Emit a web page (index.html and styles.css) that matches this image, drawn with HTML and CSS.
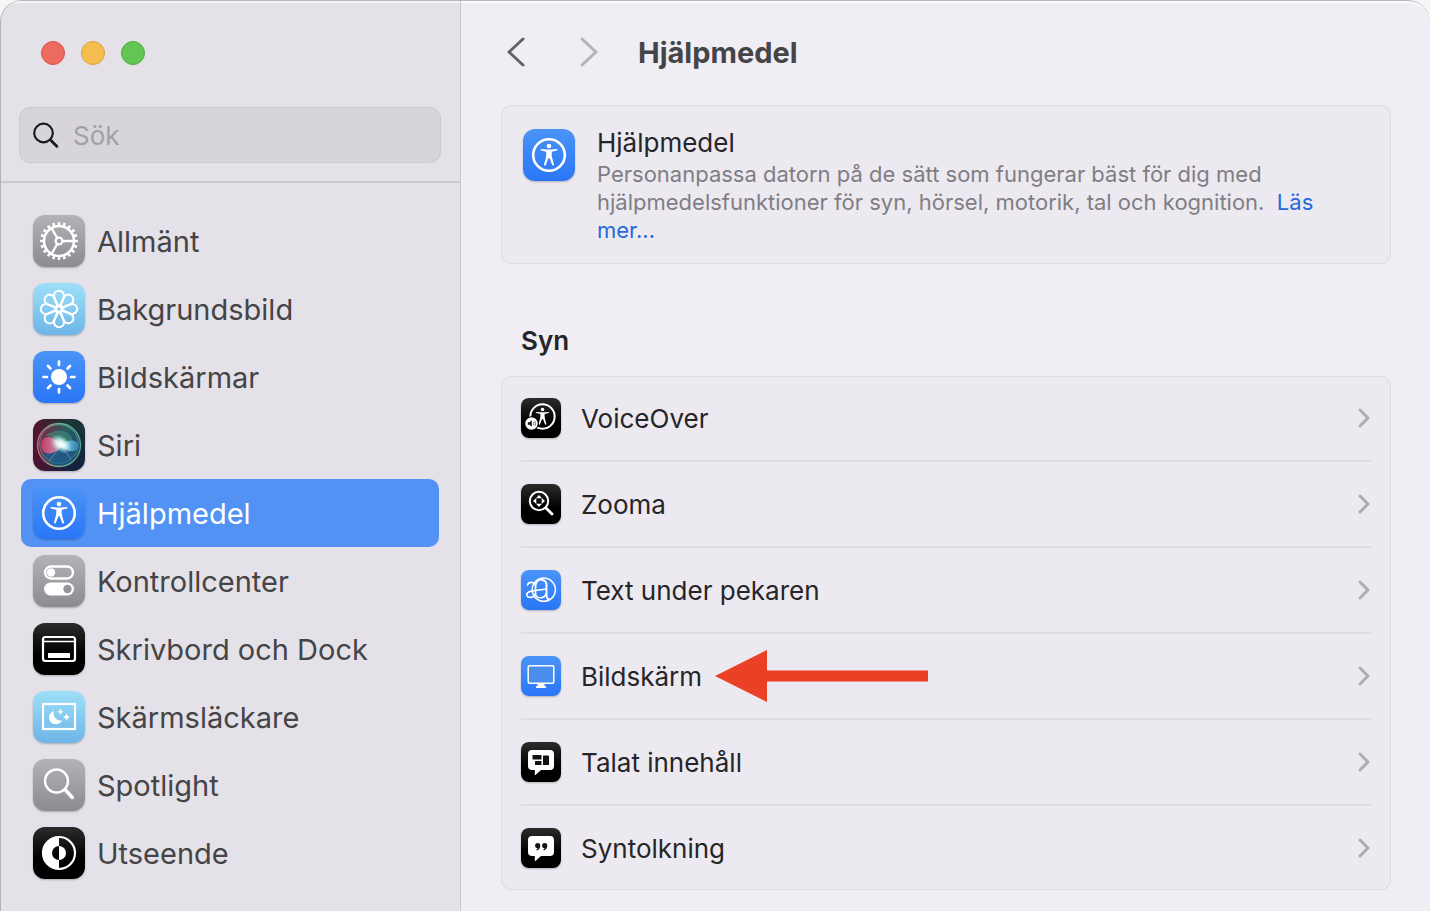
FILE: index.html
```
<!DOCTYPE html>
<html lang="sv">
<head>
<meta charset="utf-8">
<title>Hjälpmedel</title>
<meta name="viewport" content="width=device-width, initial-scale=1">
<link rel="stylesheet" href="styles.css">
</head>

<body>
<!-- shared symbols -->
<svg class="defs" width="0" height="0" aria-hidden="true">
	<symbol id="person" viewBox="0 0 52 52">
		<circle cx="26" cy="26" r="15.800" fill="none" stroke="#fff" stroke-width="2.600"/>
		<circle cx="26" cy="17" r="2.300" fill="#fff"/>
		<path d="M17.800 20q-.7 1.100.4 1.600l5 1.200q.4 3.200-.4 6.200l-1.800 6.400q0 1.600 1.600 1l2.800-7.200h1.200l2.800 7.200q1.600.6 1.600-1L29.200 29q-.8-3-.4-6.200l5-1.200q1.100-.5.4-1.600l-5.700.6h-5z" fill="#fff"/>
	</symbol>
	<symbol id="chev" viewBox="0 0 12 20">
		<path d="M2 2l8 8-8 8" fill="none" stroke="currentColor" stroke-width="2.900" stroke-linecap="round" stroke-linejoin="round"/>
	</symbol>
</svg>

<div class="window">
	<aside class="side">
		<div class="lights">
			<button class="red" type="button" aria-label="Stäng"></button>
			<button class="yellow" type="button" aria-label="Minimera"></button>
			<button class="green" type="button" aria-label="Zooma fönstret"></button>
		</div>
		<label class="search">
			<svg width="26" height="26" viewBox="0 0 26 26" aria-hidden="true"><g fill="none" stroke="#1c1c1e" stroke-linecap="round"><circle cx="10.500" cy="11" r="9.300" stroke-width="2.200"/><path d="M17.500 18l6.300 6.300" stroke-width="2.900"/></g></svg>
			<input type="text" placeholder="Sök" aria-label="Sök">
		</label>
		<nav class="menu">
			<a href="#allmant">
				<svg class="ico gray" viewBox="0 0 52 52" aria-hidden="true"><g fill="none" stroke="#fff">
					<circle cx="26" cy="26" r="15" stroke-width="2.600"/>
					<circle cx="26" cy="26" r="17.400" stroke-width="3" pathLength="120" stroke-dasharray="2.800 3.200" stroke-dashoffset="1.400"/>
					<circle cx="26" cy="26" r="3.400" stroke-width="2.200"/>
					<path d="M29.500 26H41M24.200 23L18.500 13M24.200 29L18.500 39" stroke-width="2.400"/>
				</g></svg>
				<span>Allmänt</span>
			</a>
			<a href="#bakgrundsbild">
				<svg class="ico sky" viewBox="0 0 52 52" aria-hidden="true"><defs><path id="petal" d="M26 25.500C25 20 21 16.800 21 12.800A5 5 0 0 1 31 12.800C31 16.800 27 20 26 25.500z"/></defs><g fill="none" stroke="#fff" stroke-width="2.100">
					<use href="#petal"/><use href="#petal" transform="rotate(45 26 26)"/><use href="#petal" transform="rotate(90 26 26)"/><use href="#petal" transform="rotate(135 26 26)"/>
					<use href="#petal" transform="rotate(180 26 26)"/><use href="#petal" transform="rotate(225 26 26)"/><use href="#petal" transform="rotate(270 26 26)"/><use href="#petal" transform="rotate(315 26 26)"/>
					<circle cx="26" cy="26" r="2.800" fill="#87c6ec"/>
				</g></svg>
				<span>Bakgrundsbild</span>
			</a>
			<a href="#bildskarmar">
				<svg class="ico blue" viewBox="0 0 52 52" aria-hidden="true"><circle cx="26" cy="26" r="8" fill="#fff"/><path d="M26 10.500v3.500M26 38v3.500M10.500 26H14M38 26h3.500M15 15l2.500 2.500M34.500 34.500L37 37M15 37l2.500-2.500M34.500 17.500L37 15" stroke="#fff" stroke-width="2.700" stroke-linecap="round"/></svg>
				<span>Bildskärmar</span>
			</a>
			<a href="#siri">
				<svg class="ico siri" viewBox="0 0 52 52" aria-hidden="true">
					<defs>
						<radialGradient id="glow"><stop offset="0" stop-color="#fff"/><stop offset=".4" stop-color="#f0fffd" stop-opacity=".85"/><stop offset="1" stop-color="#9ff" stop-opacity="0"/></radialGradient>
						<linearGradient id="orb" x1="0" x2="1" y1=".3" y2=".7"><stop offset="0" stop-color="#7d2344"/><stop offset=".5" stop-color="#2c5a60"/><stop offset="1" stop-color="#1b4a6b"/></linearGradient>
						<linearGradient id="rim" x1="0" x2="1"><stop offset="0" stop-color="#d2677f"/><stop offset=".5" stop-color="#6fae98"/><stop offset="1" stop-color="#4fa69b"/></linearGradient>
						<linearGradient id="pink" x1="0" x2="1"><stop offset="0" stop-color="#d93a6c"/><stop offset="1" stop-color="#f5b3c8"/></linearGradient>
						<linearGradient id="cyan" x1="0" x2="1"><stop offset="0" stop-color="#c2eef8"/><stop offset="1" stop-color="#2a92cf"/></linearGradient>
					</defs>
					<circle cx="26" cy="26" r="21.500" fill="url(#orb)" stroke="url(#rim)" stroke-width="1.300"/>
					<circle cx="26" cy="25" r="19.300" fill="none" stroke="#6bb69b" stroke-opacity=".6"/>
					<path d="M11 36Q26 25 42 35Q37 45 26 46Q16 45 11 36z" fill="#1e5a96" opacity=".65"/>
					<path d="M12 16Q30 6 39 18Q42 25 27 26Q23 18 12 16z" fill="#3f9b7c" opacity=".5"/>
					<path d="M27 25C18 14 8 17 8 26S18 39 29 27z" fill="url(#pink)" opacity=".8"/>
					<path d="M28 26C35 20 45 20 45 27S35 34 28 27z" fill="url(#cyan)" opacity=".8"/>
					<path d="M28 27L16 42M28 27L38 40" stroke="#b6b4d6" stroke-opacity=".5"/>
					<ellipse cx="28" cy="25" rx="12" ry="8" fill="url(#glow)" transform="rotate(35 28 25)"/>
				</svg>
				<span>Siri</span>
			</a>
			<a class="active" href="#hjalpmedel" aria-current="page">
				<svg class="ico blue" viewBox="0 0 52 52" aria-hidden="true"><use href="#person"/></svg>
				<span>Hjälpmedel</span>
			</a>
			<a href="#kontrollcenter">
				<svg class="ico gray" viewBox="0 0 52 52" aria-hidden="true"><rect x="12" y="11.500" width="28" height="12" rx="6" fill="none" stroke="#fff" stroke-width="2.400"/><circle cx="18" cy="17.500" r="4.200" fill="#fff"/><rect x="11" y="27.500" width="30" height="13" rx="6.500" fill="#fff"/><circle cx="34.500" cy="34" r="4.200" fill="#949398"/></svg>
				<span>Kontrollcenter</span>
			</a>
			<a href="#dock">
				<svg class="ico black" viewBox="0 0 52 52" aria-hidden="true"><rect x="10" y="14" width="32" height="24" rx="2.500" fill="none" stroke="#fff" stroke-width="2.200"/><path d="M10 18.500h32" stroke="#fff" stroke-width="1.500"/><rect x="15" y="30" width="22" height="5" rx=".5" fill="#fff"/></svg>
				<span>Skrivbord och Dock</span>
			</a>
			<a href="#skarmslackare">
				<svg class="ico sky" viewBox="0 0 52 52" aria-hidden="true"><rect x="10" y="13" width="32" height="25" fill="none" stroke="#fff" stroke-width="2.200"/><path d="M21 20A6.800 6.800 0 1 0 29 29.500A7.200 7.200 0 0 1 21 20zM27.500 17.500q.5 2.700 3 3.200-2.500.5-3 3.200-.5-2.700-3-3.200 2.500-.5 3-3.200zM33.500 22.500q.6 3 3.500 3.500-2.900.5-3.500 3.500-.6-3-3.500-3.500 2.900-.5 3.500-3.500z" fill="#fff"/></svg>
				<span>Skärmsläckare</span>
			</a>
			<a href="#spotlight">
				<svg class="ico gray" viewBox="0 0 52 52" aria-hidden="true"><g fill="none" stroke="#fff" stroke-linecap="round"><circle cx="23.500" cy="22" r="11.500" stroke-width="2.400"/><path d="M32.500 31l6.800 7.500" stroke-width="3.400"/></g></svg>
				<span>Spotlight</span>
			</a>
			<a href="#utseende">
				<svg class="ico black" viewBox="0 0 52 52" aria-hidden="true"><circle cx="26" cy="26" r="16" fill="none" stroke="#fff" stroke-width="2.200"/><path d="M26 10a16 16 0 0 0 0 32v-9a7 7 0 0 1 0-14z" fill="#fff"/><path d="M26 19a7 7 0 0 1 0 14z" fill="#fff"/></svg>
				<span>Utseende</span>
			</a>
		</nav>
	</aside>

	<main class="main">
		<header class="bar">
			<button class="back" type="button" aria-label="Bakåt"><svg width="20" height="32" viewBox="0 0 20 32" aria-hidden="true"><path d="M17 3L3 16l14 13" fill="none" stroke="currentColor" stroke-width="3" stroke-linecap="round" stroke-linejoin="round"/></svg></button>
			<button class="fwd" type="button" aria-label="Framåt"><svg width="20" height="32" viewBox="0 0 20 32" aria-hidden="true"><path d="M3 3l14 13L3 29" fill="none" stroke="currentColor" stroke-width="3" stroke-linecap="round" stroke-linejoin="round"/></svg></button>
			<h1>Hjälpmedel</h1>
		</header>

		<section class="card intro">
			<svg class="ico blue" viewBox="0 0 52 52" aria-hidden="true"><use href="#person"/></svg>
			<div>
				<h2>Hjälpmedel</h2>
				<p>Personanpassa datorn på de sätt som fungerar bäst för dig med hjälpmedelsfunktioner för syn, hörsel, motorik, tal och kognition.&nbsp; <a href="#las-mer">Läs mer...</a></p>
			</div>
		</section>

		<h3>Syn</h3>
		<div class="card list">
			<a href="#voiceover">
				<svg class="ico black" viewBox="0 0 40 40" aria-hidden="true"><svg x="1.500" y="-1.500" width="40" height="40" viewBox="0 0 52 52"><use href="#person"/></svg><circle cx="10.500" cy="25.500" r="7.200" fill="#000"/><circle cx="10.500" cy="25.500" r="6.200" fill="#fff"/><path d="M6.800 24.300h1.700l2.300-2v6.400l-2.300-2H6.800z" fill="#111"/><path d="M12.300 24q1 1.500 0 3M13.800 23q1.700 2.500 0 5" fill="none" stroke="#555" stroke-width=".8"/></svg>
				<span>VoiceOver</span>
				<svg class="chev" aria-hidden="true"><use href="#chev"/></svg>
			</a>
			<a href="#zooma">
				<svg class="ico black" viewBox="0 0 40 40" aria-hidden="true"><g fill="none" stroke="#fff" stroke-linecap="round"><circle cx="18" cy="17" r="9.200" stroke-width="2"/><path d="M25 24l6 6" stroke-width="2.800"/></g><path d="M18 11l3 3.300h-6zM18 23l3-3.300h-6zM12 17l3.300-3v6zM24 17l-3.300-3v6z" fill="#fff"/></svg>
				<span>Zooma</span>
				<svg class="chev" aria-hidden="true"><use href="#chev"/></svg>
			</a>
			<a href="#pekaren">
				<svg class="ico blue" viewBox="0 0 40 40" aria-hidden="true"><g fill="none" stroke="#fff" stroke-linecap="round"><circle cx="22.800" cy="19.700" r="11.600" stroke-width="1.500"/><path d="M6.500 15C7.500 11.500 14.500 11 14.800 16.500" stroke-width="1.600"/><path d="M25 19C17 20.500 5.800 20 5.800 24.500C5.800 29 13.500 28 14.500 23.500" stroke-width="1.600"/><path d="M14.800 14C17 7.500 25.500 8.500 25.500 15.500V24c0 3.500 1 5.500 3 5.500" stroke-width="1.900"/><path d="M14.500 15v8.500c0 6 9.500 5.500 11-.5" stroke-width="1.600"/></g></svg>
				<span>Text under pekaren</span>
				<svg class="chev" aria-hidden="true"><use href="#chev"/></svg>
			</a>
			<a href="#bildskarm">
				<svg class="ico blue" viewBox="0 0 40 40" aria-hidden="true"><rect x="7.200" y="9.700" width="25.600" height="17.600" rx="1.500" fill="#4a8fec" stroke="#fff" stroke-width="1.500"/><path d="M16.500 28h7v2.300h1.500v1.700h-10v-1.700h1.500z" fill="#fff"/></svg>
				<span>Bildskärm</span>
				<svg class="arrow" width="213" height="52" viewBox="0 0 213 52" aria-hidden="true"><path d="M0 26L52 0v20.500h161v11H52V52z" fill="#eb4026"/></svg>
				<svg class="chev" aria-hidden="true"><use href="#chev"/></svg>
			</a>
			<a href="#talat">
				<svg class="ico black" viewBox="0 0 40 40" aria-hidden="true"><path d="M11 8h18q4 0 4 4v12q0 4-4 4H20l-5.500 5q-.7.300-.7-.6V28H11q-4 0-4-4V12q0-4 4-4z" fill="#fff"/><g fill="#111"><rect x="11.500" y="13" width="9" height="4.500" rx=".6"/><rect x="22" y="13.500" width="6" height="9.500" rx=".6"/><rect x="14" y="19" width="6.500" height="4" rx=".6"/></g></svg>
				<span>Talat innehåll</span>
				<svg class="chev" aria-hidden="true"><use href="#chev"/></svg>
			</a>
			<a href="#syntolkning">
				<svg class="ico black" viewBox="0 0 40 40" aria-hidden="true"><path d="M11 8h18q4 0 4 4v12q0 4-4 4H20l-5.500 5q-.7.300-.7-.6V28H11q-4 0-4-4V12q0-4 4-4z" fill="#fff"/><path d="M19.300 17.500a2.600 2.600 0 1 0-2.700 2.600q-.2 1-1.400 1.700l.5.800q3.500-1.300 3.600-5.100zM26.300 17.500a2.600 2.600 0 1 0-2.700 2.600q-.2 1-1.400 1.700l.5.800q3.500-1.300 3.600-5.100z" fill="#111"/></svg>
				<span>Syntolkning</span>
				<svg class="chev" aria-hidden="true"><use href="#chev"/></svg>
			</a>
		</div>
	</main>
</div>
</body>
</html>
```
FILE: styles.css
```
*{margin:0;padding:0;box-sizing:border-box;}
body{background:#f6f6f6;font-family:Inter,"Liberation Sans",sans-serif;color:#262528;}
a{text-decoration:none;color:inherit;}
button{border:0;background:none;}
.defs{position:absolute;}

.window{display:flex;min-height:100vh;border-top:1px solid #b9b7bc;border-left:1px solid #b3b1b6;border-radius:22px 22px 0 0;overflow:hidden;background:#f0edf4;box-shadow:inset 0 2px 0 #fbfafc;}

/** sidebar **/
.side{flex:none;width:459px;padding-top:40px;background:#e4e1e8;box-shadow:inset 0 2px 0 #f5f4f7;}
.lights{display:flex;gap:16px;padding-left:40px;}
.lights button{width:24px;height:24px;border-radius:50%;}
.lights .red{background:#ed6a5f;border:1px solid #dc5148;}
.lights .yellow{background:#f5bf50;border:1px solid #dba03a;}
.lights .green{background:#62c655;border:1px solid #4cab3d;}

.search{display:flex;align-items:center;gap:14px;height:56px;margin:42px 19px 18px 18px;padding:0 13px;border:1px solid #cbc9ce;border-radius:11px;background:#d7d5da;}
.search svg{flex:none;}
.search input{flex:1;min-width:0;border:0;outline:0;background:none;font:26px Inter,"Liberation Sans",sans-serif;color:#262528;}
.search input::placeholder{color:#a3a1a7;opacity:1;}

.menu{padding:24px 21px 20px 20px;border-top:2px solid #cbc8cf;}
.menu a{display:flex;align-items:center;gap:12px;height:68px;padding:0 12px;border-radius:10px;font-size:29px;color:#454447;}
.menu a.active{background:#5292f5;color:#fff;}

/** icon tiles **/
.ico{flex:none;width:52px;height:52px;border-radius:12px;box-shadow:0 1px 2px rgba(0,0,0,.25);}
.gray{background:linear-gradient(#b3b2b7,#8c8b90);}
.sky{background:linear-gradient(#9edff8,#6db5e7);}
.blue{background:linear-gradient(#4a94f8,#2a76f6);}
.black{background:linear-gradient(#2c2c2c,#000 60%);}
.siri{background:linear-gradient(90deg,rgba(90,16,48,.9),rgba(20,40,60,.1) 70%),linear-gradient(#1a3a35,#12213f);}

/** content **/
.main{flex:1;min-width:0;padding:0 39px 21px 40px;border-left:1px solid #c9c6cd;}
.bar{display:flex;align-items:center;height:102px;margin-bottom:2px;padding-left:5px;}
.bar button{width:20px;height:32px;}
.bar svg{display:block;}
.back{color:#646267;}
.fwd{margin-left:53px;color:#b5b3b9;}
.bar h1{margin-left:39px;font-size:29px;font-weight:700;color:#454447;}

.card{border-radius:10px;background:#ece9f0;box-shadow:inset 0 0 0 1px #dedbe2;}
.intro{display:flex;align-items:flex-start;gap:22px;padding:20px 60px 20px 22px;}
.intro .ico{margin-top:4px;}
.intro h2{font-size:26px;line-height:35px;font-weight:400;color:#262528;}
.intro p{font-size:22px;line-height:28px;color:#807e84;}
.intro p a{color:#2569da;}

.main h3{padding:60px 20px 18px;font-size:26px;line-height:34px;font-weight:600;}
.list a{display:flex;align-items:center;height:84px;margin:0 20px;font-size:26px;}
.list a + a{height:86px;border-top:2px solid #dfdce3;}
.list .ico{width:40px;height:40px;margin-right:20px;border-radius:8px;}
.list .arrow{flex:none;margin-left:13px;}
.list .chev{flex:none;width:12px;height:20px;margin:0 1px 0 auto;color:#aeacb2;}
```
